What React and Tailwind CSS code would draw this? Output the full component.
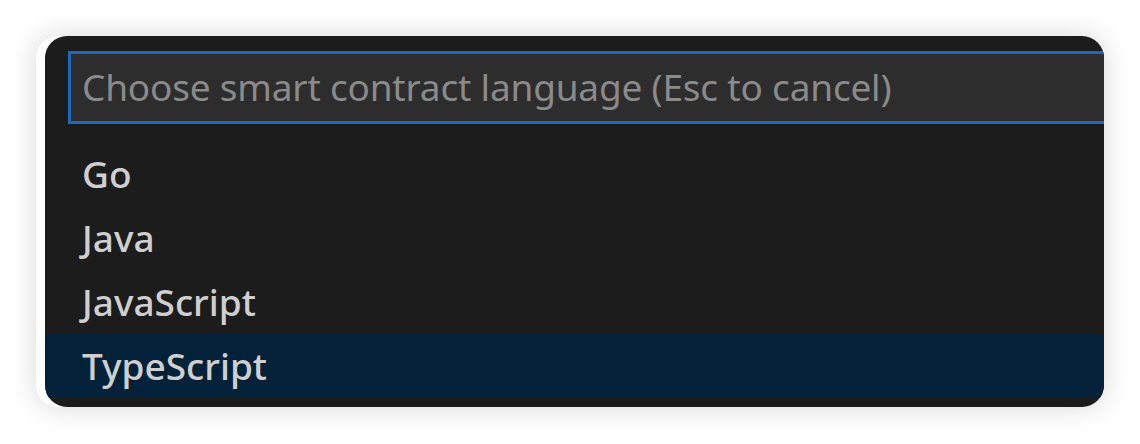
export default function App() {
  const items = ["Go", "Java", "JavaScript", "TypeScript"];
  return (
    <div className="w-[1140px] h-[444px] bg-white pt-[36px] pl-[36px]" style={{ fontFamily: '"Noto Sans", "Open Sans", sans-serif' }}>
      <div className="w-[1068px] h-[371px] rounded-[22px] bg-white shadow-[0_0_28px_rgba(0,0,0,0.16)] flex">
        <div className="ml-[9px] flex-1 rounded-[22px] overflow-hidden bg-[#1c1c1c] flex flex-col">
          <div className="mt-[15px] ml-[23px] -mr-[20px] h-[73px] border-[3px] border-[#1a6ac0] bg-[#2d2d2d] flex items-center pl-[11px] pb-[2px]">
            <span className="text-[37px] text-[#8a8a8a] tracking-[-0.2px] leading-none whitespace-nowrap">Choose smart contract language (Esc to cancel)</span>
          </div>
          <div className="mt-[17px] flex flex-col">
            {items.map((it, i) => (
              <div
                key={it}
                className={`flex items-center pl-[37px] ${i === 3 ? "bg-[#03223a] h-[65px]" : "h-[64px]"}`}
              >
                <span className="text-[37px] font-medium text-[#cfcfcf] tracking-[0px] leading-none">{it}</span>
              </div>
            ))}
          </div>
        </div>
      </div>
    </div>
  );
}
